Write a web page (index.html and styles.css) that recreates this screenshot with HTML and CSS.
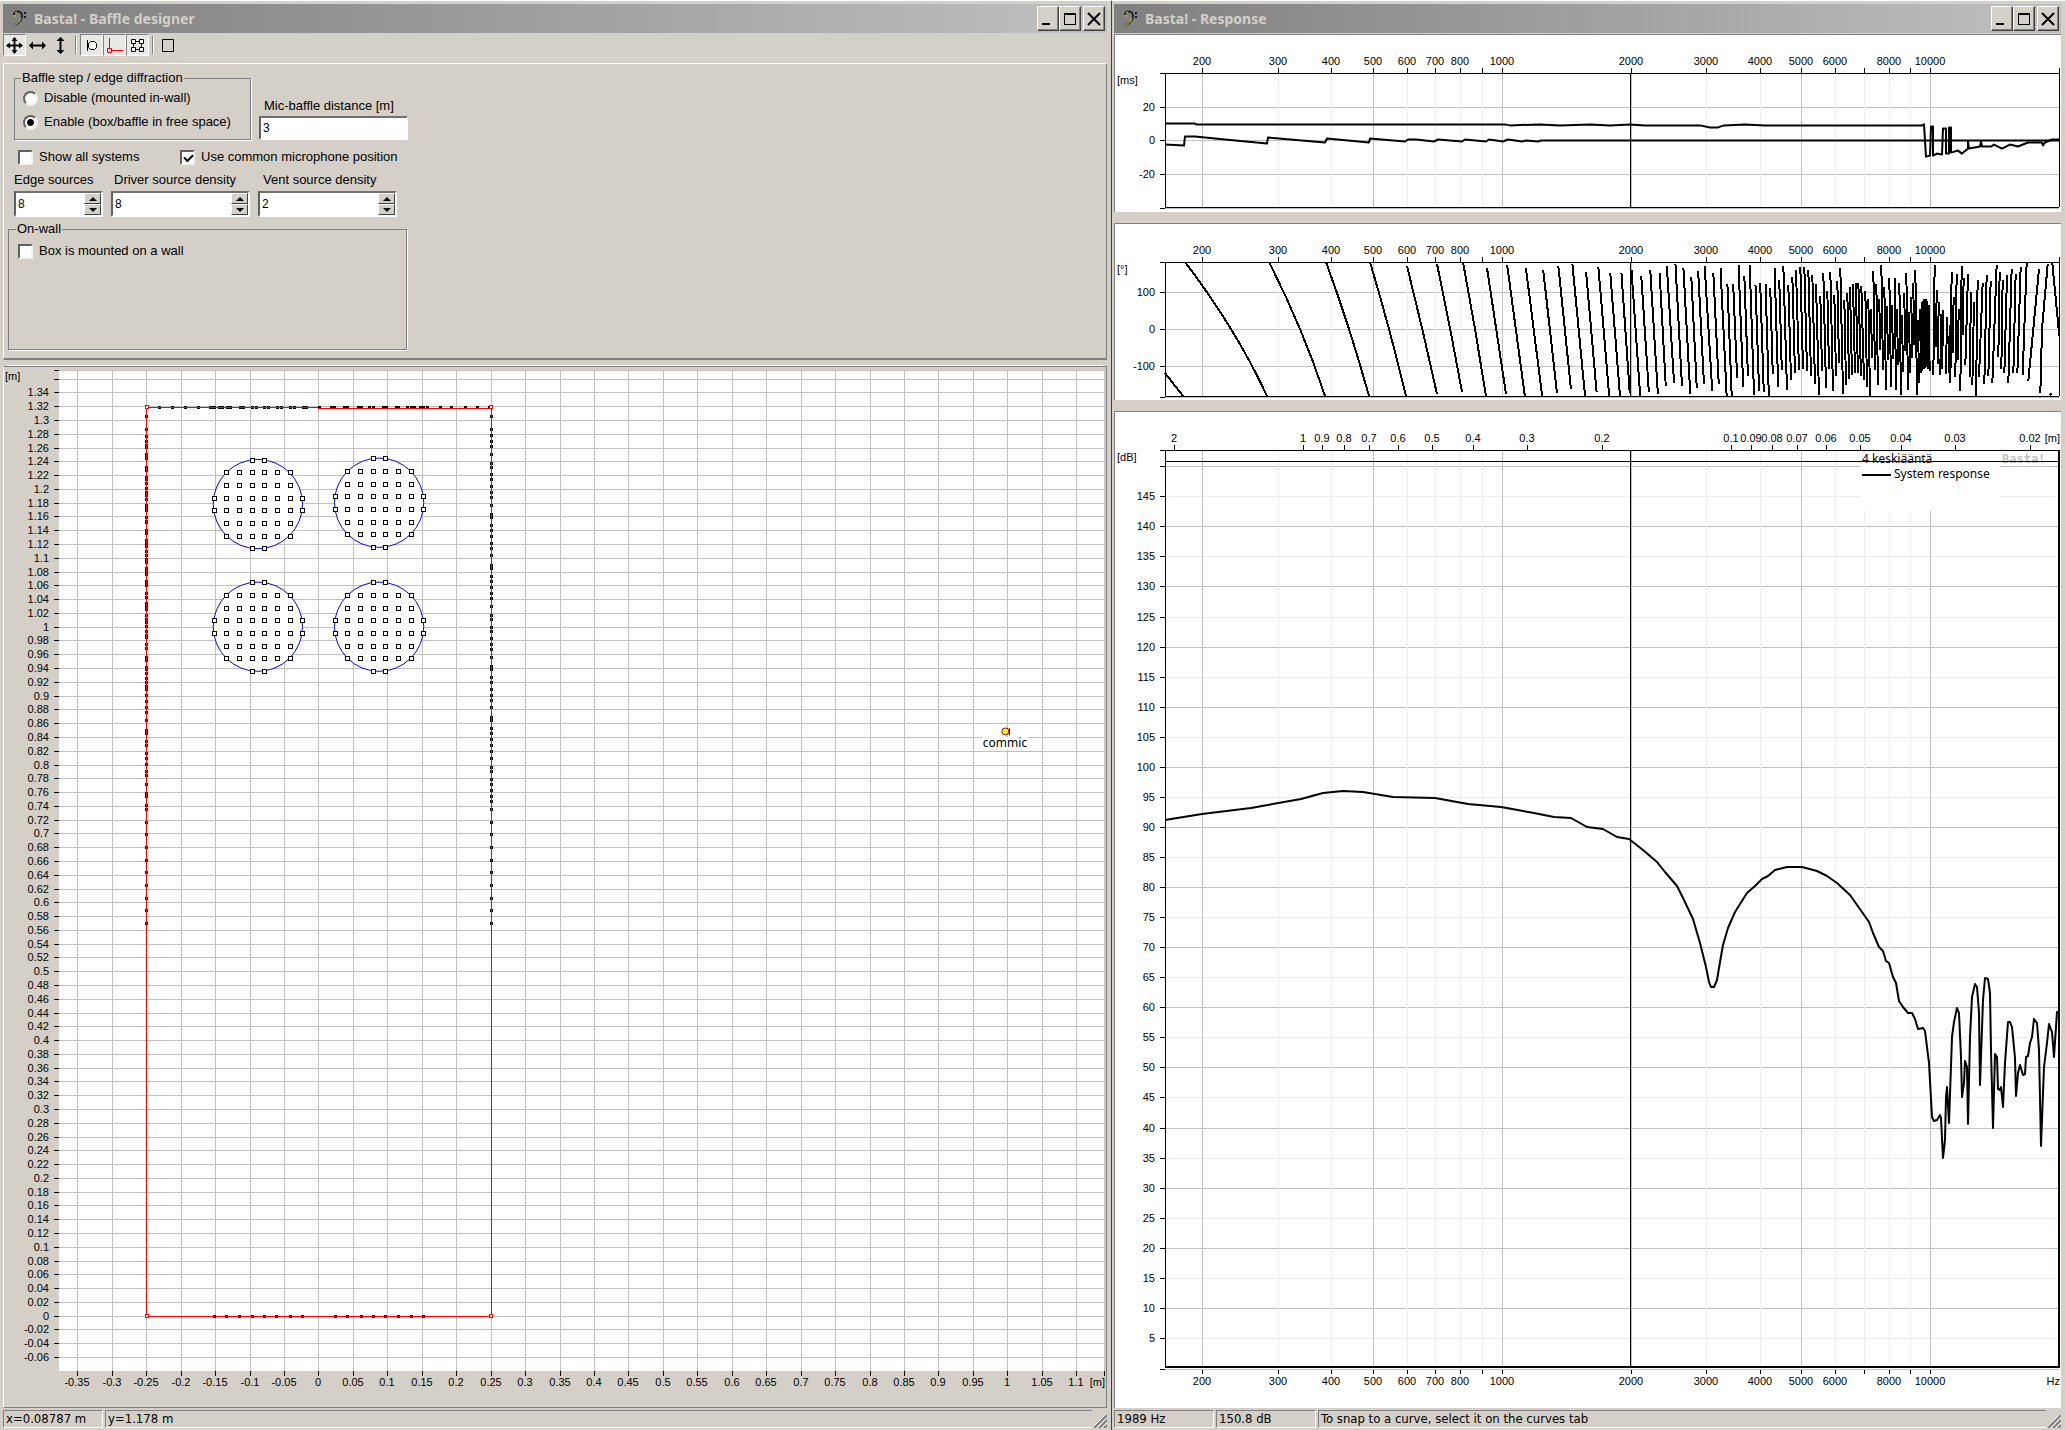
FILE: index.html
```html
<!DOCTYPE html>
<html lang="en">
<head>
    <meta charset="UTF-8">
    <meta name="viewport" content="width=device-width, initial-scale=1.0">
    <title>Basta!</title>
    <link rel="stylesheet" href="styles.css">
</head>
<body>

    <!-- Baffle designer -->
    <section class="window designer">
        <header class="titlebar">
            <svg class="clef" width="16" height="18" viewBox="0 0 16 18">
                <path d="M3 5 Q3 1.500 7 1.500 Q11 2 11 6 Q11 11 3 16" fill="none" stroke="#222" stroke-width="2"/>
                <path d="M3 16 Q9 12 10 8" fill="none" stroke="#dd3" stroke-width="1"/>
                <path d="M4 3 L6 2 M3 6 h2" stroke="#dd3"/>
                <path d="M13 3 h2 M13 7 h2" stroke="#114" stroke-width="2"/>
            </svg>
            <h1>Basta! - Baffle designer</h1>
            <div class="caption-buttons">
                <button type="button" aria-label="Minimize"><svg width="14" height="14"><path d="M1 11h8v2h-8z"/></svg></button>
                <button type="button" aria-label="Maximize"><svg width="14" height="14"><path d="M1 1h12v12h-12zM2 3v9h10v-9z" fill-rule="evenodd"/></svg></button>
                <button type="button" aria-label="Close"><svg class="cross" width="14" height="14"><path d="M1 1L13 13M13 1L1 13"/></svg></button>
            </div>
        </header>

        <div class="toolbar">
            <button type="button" class="pressed" aria-label="Move"><svg width="17" height="17"><path d="M8.500 1v15M1 8.500h15" stroke="#000" stroke-width="2"/><path d="M8.500 0l3 4h-6zM8.500 17l3-4h-6zM0 8.500l4-3v6zM17 8.500l-4-3v6z"/></svg></button>
            <button type="button" aria-label="Move horizontally"><svg width="17" height="17"><path d="M1 8.500h15" stroke="#000" stroke-width="2"/><path d="M0 8.500l4-4v8zM17 8.500l-4-4v8z"/></svg></button>
            <button type="button" aria-label="Move vertically"><svg width="17" height="17"><path d="M8.500 1v15" stroke="#000" stroke-width="2"/><path d="M8.500 0l4 4h-8zM8.500 17l4-4h-8z"/></svg></button>
            <span class="divider"></span>
            <button type="button" class="pressed" aria-label="Drivers"><svg width="17" height="17"><g fill="#fff" stroke="#000"><path d="M7.500 4.500h4l2 2v4l-2 2h-4l-2-2v-4z"/><path d="M4.500 3v11M4 8.500h2" fill="none"/></g></svg></button>
            <button type="button" class="pressed" aria-label="Edges"><svg width="17" height="17"><path d="M3.500 1v10M6 13.500h11M1.500 11.500h4v4h-4z" fill="none" stroke="#f00"/></svg></button>
            <button type="button" class="pressed" aria-label="Sources"><svg width="17" height="17"><path d="M6 4.500h5M6 12.500h5M4.500 6v5M12.500 6v5" stroke="#00f"/><path d="M2.500 2.500h4v4h-4zM10.500 2.500h4v4h-4zM2.500 10.500h4v4h-4zM10.500 10.500h4v4h-4z" fill="#fff" stroke="#000"/></svg></button>
            <span class="divider"></span>
            <button type="button" aria-label="Box"><svg width="17" height="17"><path d="M2.500 2.500h11v12h-11z" fill="none" stroke="#000"/></svg></button>
        </div>

        <form class="settings">
            <div class="row">
                <fieldset class="step">
                    <legend>Baffle step / edge diffraction</legend>
                    <label><input type="radio" name="step">Disable (mounted in-wall)</label>
                    <label><input type="radio" name="step" checked>Enable (box/baffle in free space)</label>
                </fieldset>
                <div class="field mic">
                    <label for="distance">Mic-baffle distance [m]</label>
                    <input type="text" id="distance" value="3">
                </div>
            </div>
            <div class="row checks">
                <label><input type="checkbox">Show all systems</label>
                <label><input type="checkbox" checked>Use common microphone position</label>
            </div>
            <div class="row spins">
                <div class="field edge">
                    <label for="edge">Edge sources</label>
                    <div class="spin">
                        <input type="text" id="edge" value="8">
                        <div class="arrows"><button type="button" class="up" aria-label="More"></button><button type="button" class="down" aria-label="Less"></button></div>
                    </div>
                </div>
                <div class="field">
                    <label for="driver">Driver source density</label>
                    <div class="spin">
                        <input type="text" id="driver" value="8">
                        <div class="arrows"><button type="button" class="up" aria-label="More"></button><button type="button" class="down" aria-label="Less"></button></div>
                    </div>
                </div>
                <div class="field vent">
                    <label for="vent">Vent source density</label>
                    <div class="spin">
                        <input type="text" id="vent" value="2">
                        <div class="arrows"><button type="button" class="up" aria-label="More"></button><button type="button" class="down" aria-label="Less"></button></div>
                    </div>
                </div>
            </div>
            <fieldset class="wall">
                <legend>On-wall</legend>
                <label><input type="checkbox">Box is mounted on a wall</label>
            </fieldset>
        </form>

        <div class="canvas"><svg id="baffle"></svg></div>

        <footer class="statusbar">
            <span class="pos">x=0.08787 m</span>
            <span class="rest">y=1.178 m</span>
            <svg class="grip" width="13" height="13"><path d="M0 13L13 0M5 13L13 5M10 13L13 10" stroke="#808080" stroke-width="2"/><path d="M-1 12L12 -1M3 13L13 3M8 13L13 8" stroke="#fff"/></svg>
        </footer>
    </section>

    <!-- Response -->
    <section class="window response">
        <header class="titlebar">
            <svg class="clef" width="16" height="18" viewBox="0 0 16 18">
                <path d="M3 5 Q3 1.500 7 1.500 Q11 2 11 6 Q11 11 3 16" fill="none" stroke="#222" stroke-width="2"/>
                <path d="M3 16 Q9 12 10 8" fill="none" stroke="#dd3" stroke-width="1"/>
                <path d="M4 3 L6 2 M3 6 h2" stroke="#dd3"/>
                <path d="M13 3 h2 M13 7 h2" stroke="#114" stroke-width="2"/>
            </svg>
            <h1>Basta! - Response</h1>
            <div class="caption-buttons">
                <button type="button" aria-label="Minimize"><svg width="14" height="14"><path d="M1 11h8v2h-8z"/></svg></button>
                <button type="button" aria-label="Maximize"><svg width="14" height="14"><path d="M1 1h12v12h-12zM2 3v9h10v-9z" fill-rule="evenodd"/></svg></button>
                <button type="button" aria-label="Close"><svg class="cross" width="14" height="14"><path d="M1 1L13 13M13 1L1 13"/></svg></button>
            </div>
        </header>

        <div class="plot small"><svg id="delay"></svg></div>
        <div class="plot small"><svg id="phase"></svg></div>
        <div class="plot large"><svg id="spl"></svg></div>

        <footer class="statusbar">
            <span class="pos">1989 Hz</span>
            <span class="pos">150.8 dB</span>
            <span class="rest">To snap to a curve, select it on the curves tab</span>
            <svg class="grip" width="13" height="13"><path d="M0 13L13 0M5 13L13 5M10 13L13 10" stroke="#808080" stroke-width="2"/><path d="M-1 12L12 -1M3 13L13 3M8 13L13 8" stroke="#fff"/></svg>
        </footer>
    </section>

    <script src="charts.js"></script>
</body>
</html>
```

FILE: styles.css
```css
* {
    box-sizing: border-box;
}
body {
    margin: 0;
    height: 100vh;
    display: grid;
    grid-template-columns: 1112fr 953fr;
    background-color: #d4d0c8;
    font-family: "Liberation Sans", Arial, sans-serif;
    font-size: 13px;
    line-height: 16px;
    color: #000;
}
.window {
    display: flex;
    flex-direction: column;
    min-width: 0;
    min-height: 0;
    padding: 3px 4px 2px 3px;
    border-top: 1px solid #fff;
}
.designer {
    border-right: 1px solid #404040;
}
.response {
    padding: 3px 4px 2px 2px;
}

/* title bar */
.titlebar {
    flex: none;
    display: flex;
    align-items: center;
    height: 29px;
    padding: 0 2px 0 8px;
    background: linear-gradient(to right, #808080, #c0c0c0);
}
.titlebar h1 {
    flex: 1;
    margin: 0 0 0 7px;
    font-family: "Noto Sans", Tahoma, sans-serif;
    font-size: 14px;
    line-height: 20px;
    font-weight: bold;
    color: #d4d0c8;
}
.caption-buttons {
    display: flex;
}
.caption-buttons button {
    display: flex;
    align-items: center;
    justify-content: center;
    width: 22px;
    height: 25px;
    padding: 0;
    background-color: #d4d0c8;
    border: 1px solid;
    border-color: #fff #404040 #404040 #fff;
    box-shadow: inset -1px -1px 0 #808080;
}
.caption-buttons button:last-child {
    margin-left: 2px;
}
.caption-buttons .cross path {
    stroke: #000;
    stroke-width: 2;
}

/* toolbar */
.toolbar {
    flex: none;
    display: flex;
    height: 30px;
    padding: 1px 0 6px;
}
.toolbar button {
    display: flex;
    align-items: center;
    justify-content: center;
    width: 23px;
    height: 22px;
    padding: 0;
    background: none;
    border: 1px solid transparent;
}
.toolbar .pressed {
    background-color: #eae8e4;
    border-color: #808080 #fff #fff #808080;
}
.divider {
    width: 2px;
    height: 18px;
    margin: 2px 3px 0;
    border-left: 1px solid #808080;
    border-right: 1px solid #fff;
}

/* settings form */
.settings {
    flex: none;
    padding: 6px 4px 8px;
    border: 1px solid;
    border-color: #fff #808080 #808080 #fff;
    border-bottom-width: 2px;
}
.row {
    display: flex;
    gap: 8px;
    padding-left: 6px;
}
fieldset {
    margin: 0;
    padding: 0 8px 5px;
    border: 1px solid #808080;
    box-shadow: 1px 1px 0 #fff;
}
legend {
    padding: 0 1px;
    margin-left: -2px;
}
.step {
    width: 237px;
}
.step label {
    display: flex;
    align-items: center;
    gap: 6px;
    height: 24px;
}
input {
    margin: 0;
    font: 12px/16px "Liberation Sans", Arial, sans-serif;
    color: #000;
}
input[type="radio"],
input[type="checkbox"] {
    appearance: none;
    flex: none;
    width: 15px;
    height: 15px;
    background-color: #fff;
    border: 2px solid;
    border-color: #606060 #f4f2ee #f4f2ee #606060;
}
input[type="radio"] {
    border-radius: 50%;
}
input[type="radio"]:checked {
    background-image: radial-gradient(circle, #000 3px, transparent 4px);
}
input[type="checkbox"]:checked::before {
    content: "";
    display: block;
    width: 7px;
    height: 4px;
    margin: 2px;
    border-left: 2px solid #000;
    border-bottom: 2px solid #000;
    transform: rotate(-45deg);
}
input[type="text"] {
    width: 100%;
    padding: 0 2px;
    border: none;
    background-color: #fff;
}
.field {
    display: flex;
    flex-direction: column;
    gap: 3px;
    width: 139px;
}
.field label {
    padding-left: 3px;
}
.mic {
    gap: 2px;
    width: 149px;
    align-self: flex-end;
}
.mic label,
.vent label {
    padding-left: 5px;
}
.mic input[type="text"],
.spin {
    height: 24px;
    border: 2px solid;
    border-color: #707070 #fff #fff #606060;
}
.checks {
    margin-top: 9px;
    padding-left: 10px;
    gap: 0;
}
.checks label,
.wall label {
    display: flex;
    align-items: center;
    gap: 6px;
}
.checks label:first-child {
    width: 162px;
}
.spins {
    margin-top: 7px;
}
.edge {
    width: 89px;
}
.edge label {
    padding-left: 0;
}
.spin {
    display: flex;
    height: 26px;
    background-color: #fff;
}
.spin input {
    flex: 1;
    min-width: 0;
}
.arrows {
    display: flex;
    flex-direction: column;
    width: 17px;
}
.arrows button {
    flex: 1;
    display: flex;
    align-items: center;
    justify-content: center;
    padding: 0;
    background-color: #d4d0c8;
    border: 1px solid;
    border-color: #fff #404040 #404040 #fff;
}
.arrows button::before {
    content: "";
    border: 4px solid transparent;
}
.arrows .up::before {
    border-top-width: 0;
    border-bottom-color: #000;
}
.arrows .down::before {
    border-bottom-width: 0;
    border-top-color: #000;
}
.wall {
    width: 399px;
    height: 129px;
    margin-top: 4px;
    padding: 6px 9px;
}

/* drawing areas */
.canvas {
    flex: 1;
    min-height: 0;
    margin: 6px 0 2px;
    border: 1px solid;
    border-color: #808080 #808080 #808080 #fff;
    box-shadow: 0 -5px 0 -4px #fff;
}
.plot {
    min-height: 0;
    margin-bottom: 11px;
    background-color: #fff;
    border-top: 1px solid #808080;
    border-left: 1px solid #808080;
}
.response .titlebar {
    margin-bottom: 1px;
}
.small {
    flex: 177 0 0;
}
.large {
    flex: 998 0 0;
    margin-bottom: 2px;
}
.canvas svg,
.plot svg {
    display: block;
    width: 100%;
    height: 100%;
}
svg text {
    font: 11px "Liberation Sans", Arial, sans-serif;
}
svg .name,
svg .legend {
    font: 12px "Noto Sans", Tahoma, sans-serif;
}
svg .brand {
    font: bold 12px "DejaVu Sans Mono", monospace;
}
.plot line,
.canvas line,
.canvas rect {
    shape-rendering: crispEdges;
}

/* status bar */
.statusbar {
    flex: none;
    display: flex;
    gap: 2px;
    height: 18px;
    font-family: "DejaVu Sans Condensed", Tahoma, sans-serif;
    font-size: 13px;
}
.statusbar span {
    padding-left: 2px;
    border: 1px solid;
    border-color: #808080 #fff #fff #808080;
    white-space: nowrap;
}
.pos {
    width: 100px;
}
.statusbar .rest {
    flex: 1;
    border-right: none;
}
.grip {
    align-self: flex-end;
}
```

FILE: charts.js
```js
const NS = "http://www.w3.org/2000/svg";

function add(svg, name, attrs, text) {
    const el = document.createElementNS(NS, name);
    for (const key in attrs) el.setAttribute(key, attrs[key]);
    if (text !== undefined) el.textContent = text;
    svg.appendChild(el);
    return el;
}

function line(svg, x1, y1, x2, y2, color, width) {
    // half pixel shift keeps the 1px lines sharp
    const s = width === 2 ? 0 : 0.5;
    add(svg, "line", {
        x1: Math.round(x1) + (x1 === x2 ? s : 0), x2: Math.round(x2) + (x1 === x2 ? s : 0),
        y1: Math.round(y1) + (y1 === y2 ? s : 0), y2: Math.round(y2) + (y1 === y2 ? s : 0),
        stroke: color || "#000", "stroke-width": width || 1
    });
}

function label(svg, x, y, text, anchor, cls) {
    const attrs = { x: Math.round(x), y: Math.round(y) + 4, "text-anchor": anchor || "middle" };
    if (cls) attrs.class = cls;
    add(svg, "text", attrs, text);
}

// ---------- traces, on an 894 unit wide frequency axis ----------
const delayTop = [[0,123],[30,123],[31,124],[340,124],[345,125],[375,124],[395,125],[425,124],[445,125],[465,124],[480,125],[535,125],[545,127],[553,127],[559,125],[580,124],[600,125],[757,125],[759,124],[761,156],[765,155],[766,126],[768,126],[768,155],[772,153],[777,154],[778,128],[781,128],[781,153],[784,153],[784,127],[786,127],[786,152],[793,150],[797,153],[803,148],[803,141],[804,148],[815,146],[816,141],[817,146],[826,146],[829,144],[837,148],[845,144],[853,146],[863,142],[877,142],[878,145],[880,142],[887,139],[894,139]];
const delayLow = [[0,144],[19,145],[20,136],[30,136],[60,139],[102,143],[103,137],[160,142],[162,138],[204,142],[205,138],[240,141],[243,139],[251,139],[269,141],[273,139],[297,141],[300,139],[321,141],[324,139],[338,141],[343,139],[357,141],[361,140],[373,141],[376,140],[894,140]];

const splTrace = [[0,820],[37,814],[86,808],[136,799],[158,793],[178,791],[198,792],[228,797],[270,798],[303,804],[336,807],[369,813],[389,817],[406,818],[422,827],[438,829],[452,837],[464,839],[478,850],[492,862],[500,872],[512,886],[518,898],[528,919],[535,943],[541,967],[544,982],[546,987],[549,987],[552,980],[555,962],[558,945],[563,928],[570,912],[582,893],[590,886],[597,879],[603,876],[610,870],[622,867],[637,867],[652,871],[662,876],[672,883],[685,895],[697,912],[704,922],[708,933],[714,947],[718,951],[721,961],[724,963],[728,977],[731,983],[734,1001],[738,1007],[743,1013],[747,1013],[750,1019],[753,1029],[758,1028],[760,1031],[764,1063],[767,1117],[769,1121],[772,1120],[775,1115],[776,1118],[778,1158],[780,1140],[781,1097],[782,1087],[784,1123],[787,1037],[789,1022],[792,1008],[794,1013],[796,1057],[797,1097],[799,1083],[800,1061],[802,1067],[803,1124],[805,1037],[807,997],[810,984],[812,987],[814,1013],[815,1085],[818,1000],[820,978],[823,979],[825,993],[826,1050],[828,1128],[830,1054],[832,1057],[833,1089],[835,1090],[836,1087],[838,1107],[840,1063],[843,1022],[845,1022],[847,1027],[850,1058],[851,1096],[853,1073],[855,1065],[858,1075],[860,1074],[861,1057],[863,1056],[865,1043],[867,1037],[869,1019],[872,1023],[874,1050],[876,1146],[879,1067],[882,1043],[884,1024],[887,1032],[889,1057],[892,1012],[894,1012]];

// phase wraps: start x y, end x y, and how far the slow ones bow out
const slowWraps = [[0,372,18,395,0],[20,261,102,395,10],[104,261,160,395,6],[161,261,204,395,3],[205,261,241,395,2],[242,265,272,393,1],[272,263,297,391,1],[298,261,321,395,1],[322,267,341,393,0]];

const midWraps = [[20,793,69,1185],[72,802,117,1185],[120,808,158,1175],[162,796,197,1165],[201,790,236,1185],[239,814,268,1172],[273,798,303,1185],[306,817,333,1185],[337,817,360,1175],[365,808,389,1185],[392,824,413,1172],[417,808,438,1178],[443,817,460,1155],[463,796,483,1145],[487,790,505,1155],[509,802,528,1178],[531,829,546,1160],[550,811,566,1148],[568,796,589,1170],[592,817,607,1148],[612,802,629,1185],[631,848,643,1185],[647,848,658,1130],[662,793,675,1158],[678,824,688,1124],[693,793,705,1182],[709,853,719,1170],[722,845,732,1172],[737,848,746,1185],[750,862,757,1120],[762,802,772,1158],[775,838,782,1108]];

// thirds of a unit, counted from x = 615
const fastWraps = [[10,30,21,402],[25,88,33,372],[37,62,45,352],[48,43,57,342],[61,34,69,338],[73,34,81,345],[85,43,93,360],[97,58,105,384],[108,85,117,416],[121,121,126,345],[130,52,138,396],[142,106,147,338],[151,49,159,404],[163,118,168,360],[172,76,177,320],[181,37,189,413],[193,133,198,388],[202,112,207,370],[210,94,216,358],[219,85,225,352],[227,82,234,352],[235,82,243,360],[244,90,252,372],[256,106,261,392],[265,130,270,420],[273,160,276,305],[280,46,285,342],[289,85,294,386],[298,130,300,282],[304,28,309,342],[313,92,318,402],[321,150,324,312],[328,67,333,392],[336,148,339,310],[344,67,348,402],[351,160,354,326],[358,82,363,416],[366,178,369,348],[373,112,375,285],[379,52,384,402],[387,168,390,350],[394,124,396,305],[400,82,402,267],[406,43,411,416],[414,193,417,380],[420,160,423,352],[423,160,426,345],[426,139,429,338],[429,136,432,338],[432,130,435,336],[437,130,440,334],[441,136,444,340],[446,148,449,346],[464,28,460,358],[470,102,468,274],[476,138,474,325],[483,175,481,358],[490,163,486,338],[501,184,498,355],[509,208,507,350],[515,48,511,380],[521,124,518,292],[530,55,526,364],[536,160,534,313],[545,30,541,404],[551,67,548,236],[564,55,556,328],[573,108,569,364],[582,138,577,388],[593,72,588,420],[608,82,597,364],[620,58,613,384],[632,76,625,360],[650,28,637,380],[659,48,655,302],[668,72,664,338],[681,58,673,352],[695,40,685,380],[707,55,700,352],[722,34,712,352],[740,22,728,358],[777,40,745,374],[786,220,781,412],[803,25,786,220],[817,22,838,240],[814,412,808,418]];

// ---------- frequency plots ----------
function frequencyPlot(id, opt) {
    const svg = document.getElementById(id);
    svg.replaceChildren();
    const w = svg.clientWidth, h = svg.clientHeight;
    const box = { l: 50, r: w - 2, t: 38, b: h - opt.bottom };
    const bw = box.r - box.l;
    const fx = f => box.l + bw * (Math.log10(f) - 2.2142) / (4.301 - 2.2142);
    const vy = v => box.b - (v - opt.min) / (opt.max - opt.min) * (box.b - box.t);

    for (let v = opt.first; v < opt.max; v += opt.step) {
        line(svg, box.l, vy(v), box.r, vy(v), opt.light && v % opt.light ? "#eee" : "#c0c0c0");
    }
    const freqs = [200, 300, 400, 500, 600, 700, 800, 900, 1000, 2000, 3000, 4000, 5000, 6000, 7000, 8000, 9000, 10000];
    freqs.forEach(f => {
        const major = /^[125]/.test(f);
        line(svg, fx(f), box.t, fx(f), box.b, major ? "#c0c0c0" : "#eee");
        const hidden = f === 900 || f === 7000 || f === 9000;
        if (opt.wavelength) {
            line(svg, fx(f), box.b + 2, fx(f), box.b + 6);
            if (!hidden) label(svg, fx(f), box.b + 13, f);
        } else {
            line(svg, fx(f), box.t - 5, fx(f), box.t);
            if (!hidden) label(svg, fx(f), box.t - 12, f);
        }
    });

    for (let v = opt.first; v < opt.max; v += opt.step) {
        line(svg, box.l - 5, vy(v), box.l, vy(v));
        if (v <= opt.lastLabel) label(svg, box.l - 10, vy(v), v, "end");
    }
    line(svg, box.l - 5, box.t, box.r, box.t);
    line(svg, box.l - 5, box.b + 1, box.r, box.b + 1, "#c0c0c0");
    line(svg, box.l - 5, box.b + 1, box.l, box.b + 1);
    label(svg, 2, box.t + 7, opt.unit, "start");

    // data is drawn in the plot's own units and stretched with it
    const sx = x => box.l + x * bw / 894;
    const sy = y => box.t + (y - opt.top) * (box.b - box.t) / opt.height;
    (opt.traces || []).forEach(trace => {
        add(svg, "polyline", {
            points: trace.map(p => sx(p[0]) + "," + sy(p[1])).join(" "),
            fill: "none", stroke: "#000", "stroke-width": 2, "stroke-linejoin": "round"
        });
    });
    (opt.strokes || []).forEach(s => {
        const cx = (s[0] + s[2]) / 2 + (s[4] || 0), cy = (s[1] + s[3]) / 2;
        add(svg, "path", {
            d: `M${sx(s[0])} ${sy(s[1])}Q${sx(cx)} ${sy(cy)} ${sx(s[2])} ${sy(s[3])}`,
            fill: "none", stroke: "#000", "stroke-width": 2, "shape-rendering": "crispEdges"
        });
    });

    if (opt.wavelength) {
        [2, 1, 0.9, 0.8, 0.7, 0.6, 0.5, 0.4, 0.3, 0.2, 0.1, 0.09, 0.08, 0.07, 0.06, 0.05, 0.04, 0.03, 0.02].forEach(m => {
            const x = fx(343 / m);
            line(svg, x, box.t - 5, x, box.t);
            label(svg, x, box.t - 12, m);
        });
        label(svg, box.r + 1, box.t - 12, "[m]", "end");
        label(svg, box.r + 1, box.b + 13, "Hz", "end");
        const y = box.t + 11;
        add(svg, "rect", { x: box.r - 199, y: box.t + 2, width: 140, height: 59, fill: "#fff" });
        label(svg, box.r - 197, box.t + 9, "4 keskiääntä", "start", "legend");
        line(svg, box.r - 197, box.t + 25, box.r - 168, box.t + 25, "#000", 2);
        label(svg, box.r - 165, box.t + 24, "System response", "start", "legend");
        add(svg, "text", { x: box.r - 57, y: box.t + 13, class: "brand", fill: "#c0c0c0" }, "Basta!");
        line(svg, box.l, y, box.r, y);
        line(svg, box.l, box.b - 1, box.r, box.b - 1, "#000", 2);
        line(svg, box.r, box.t, box.r, box.b, "#000", 2);
    } else {
        line(svg, box.r, box.t - 5, box.r, box.t);
        line(svg, box.l, box.b, box.r, box.b);
        line(svg, box.r, box.t, box.r, box.b);
    }
    line(svg, box.l, box.t, box.l, box.b);
    line(svg, fx(1989), box.t, fx(1989), box.b);
}

// ---------- baffle ----------
function baffle() {
    const svg = document.getElementById("baffle");
    svg.replaceChildren();
    const w = svg.clientWidth, h = svg.clientHeight;
    const l = 55, r = w - 2, t = 3, b = h - 36;
    const scale = (r - l) / 1.517;
    const px = x => l + (x + 0.3767) * scale;
    const py = y => t + (1.3726 - y) * (b - t) / 1.4529;

    add(svg, "rect", { x: l, y: t, width: r - l, height: b - t, fill: "#fff" });
    for (let i = -7; i <= 22; i++) {
        const x = px(i * 0.05);
        line(svg, x, t, x, b, "#c0c0c0");
        line(svg, x, b, x, b + 5);
        label(svg, x, b + 11, +(i * 0.05).toFixed(2));
    }
    for (let i = -3; i <= 68; i++) {
        const y = py(i * 0.02);
        line(svg, l, y, r, y, "#c0c0c0");
        line(svg, l - 5, y, l, y);
        if (i < 68) label(svg, l - 10, y, +(i * 0.02).toFixed(2), "end");
    }
    line(svg, l, t, r, t, "#c0c0c0");
    line(svg, l - 5, t, l, t);
    line(svg, r, t, r, b, "#c0c0c0");
    line(svg, r, b, r, b + 5);
    label(svg, 1, t + 6, "[m]", "start");
    label(svg, r + 1, b + 11, "[m]", "end");

    const dot = (x, y) => add(svg, "rect", { x: Math.round(x) - 1, y: Math.round(y) - 1, width: 3, height: 3, fill: "#000" });
    const square = (x, y, size, color) => add(svg, "rect", { x: Math.round(x - size / 2) + 0.5, y: Math.round(y - size / 2) + 0.5, width: size, height: size, fill: "#fff", stroke: color });

    // edge sources
    for (let i = 0; i < 41; i++) {
        const y = 1.306 - i * 0.0184;
        dot(px(-0.25), py(y));
        dot(px(0.25), py(y));
        if (i > 1 && i < 32) {
            dot(px(-0.25), py(y + 0.004 + (i % 5) * 0.002));
            dot(px(0.25), py(y + 0.005 + (i % 4) * 0.002));
        }
        if (i > 1 && i < 22) dot(px(-0.25), py(y - 0.005));
    }
    [-0.231, -0.213, -0.194, -0.175, -0.158, -0.155, -0.151, -0.145, -0.140, -0.133, -0.128, -0.114, -0.109, -0.097, -0.091, -0.079, -0.073, -0.060, -0.054, -0.042, -0.035, -0.023, -0.018, 0.001, 0.018, 0.023, 0.037, 0.042, 0.057, 0.061, 0.074, 0.079, 0.093, 0.098, 0.112, 0.115, 0.128, 0.134, 0.138, 0.148, 0.152, 0.157, 0.176, 0.193, 0.212, 0.230, 0.247].forEach(x => dot(px(x), py(1.319)));
    [24, 42, 61, 79, 97, 115, 134, 152].forEach(x => {
        dot(px(x / 1000), py(0));
        dot(px(-x / 1000), py(0));
    });

    // box outline runs over them
    const left = Math.round(px(-0.25)), right = Math.round(px(0.25));
    const top = Math.round(py(1.3195)), bottom = Math.round(py(0));
    line(svg, left, top, px(0), top, "#f00");
    line(svg, px(0), top + 1, right, top + 1, "#f00");
    line(svg, left, top, left, bottom, "#f00");
    line(svg, right, top, right, bottom, "#f00");
    line(svg, left, bottom, right, bottom, "#f00");
    [[-0.25, 1.32], [0.25, 1.319], [-0.25, 0], [0.25, 0]].forEach(p => square(px(p[0]), py(p[1]), 3, "#f00"));

    // drivers with their point sources
    [[-0.088, 1.178], [0.088, 1.18], [-0.088, 1], [0.088, 1]].forEach(d => {
        const radius = 0.0648 * scale;
        add(svg, "circle", { cx: px(d[0]), cy: py(d[1]), r: radius, fill: "#fff", stroke: "#00f" });
        for (let i = -3.5; i <= 3.5; i++) {
            for (let j = -3.5; j <= 3.5; j++) {
                if (Math.hypot(i, j) < 3.6) square(px(d[0] + i * 0.0184), py(d[1] + j * 0.0184), 4, "#000");
            }
        }
    });

    // microphone
    const mx = px(1), my = py(0.848);
    add(svg, "rect", { x: mx - 25, y: my + 6, width: 46, height: 13, fill: "#fff" });
    add(svg, "circle", { cx: mx - 2, cy: my, r: 3.5, fill: "#ff0", stroke: "#a00000" });
    line(svg, mx + 2, my - 3, mx + 2, my + 4, "#a00000");
    label(svg, mx - 2, my + 12, "commic", "middle", "name");
}

function draw() {
    baffle();
    frequencyPlot("delay", {
        min: -40, max: 40, first: -20, step: 20, lastLabel: 20, unit: "[ms]", bottom: 5,
        top: 73, height: 133, traces: [delayTop, delayLow]
    });
    frequencyPlot("phase", {
        min: -180, max: 180, first: -100, step: 100, lastLabel: 100, unit: "[°]", bottom: 5,
        top: 261, height: 134,
        strokes: slowWraps.concat(
            midWraps.map(s => [335 + s[0] / 2.775, s[1] / 3, 335 + s[2] / 2.775, s[3] / 3]),
            fastWraps.map(s => [615 + s[0] / 3, 255 + s[1] / 3, 615 + s[2] / 3, 255 + s[3] / 3]))
    });
    frequencyPlot("spl", {
        min: 0, max: 152.7, first: 5, step: 5, lastLabel: 145, light: 10, unit: "[dB]", bottom: 40,
        top: 450, height: 918, wavelength: true, traces: [splTrace]
    });
}

draw();
window.addEventListener("resize", draw);
```
